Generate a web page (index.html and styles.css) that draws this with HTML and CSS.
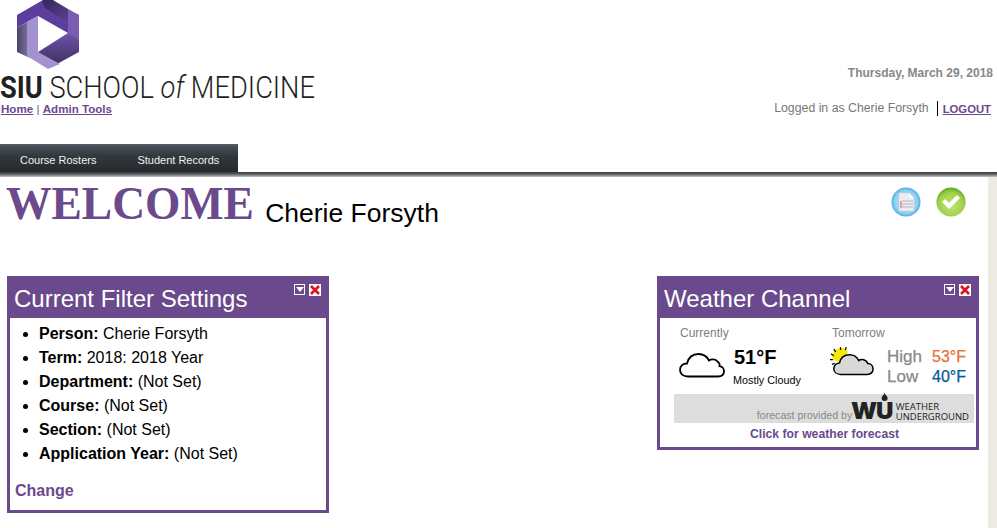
FILE: index.html
```html
<!DOCTYPE html>
<html lang="en">
<head>
	<meta charset="UTF-8">
	<title>SIU School of Medicine</title>
	<link rel="stylesheet" href="styles.css">
</head>
<body>
	<div class="top">
		<div class="brand">
			<svg class="hex" width="64" height="70" viewBox="16 0 64 70">
				<defs>
					<linearGradient id="g1" x1="0" y1="0" x2="1" y2="0"><stop offset="0" stop-color="#4a4468"/><stop offset="1" stop-color="#8479a8"/></linearGradient>
					<linearGradient id="g2" x1="0" y1="0" x2="1" y2="1"><stop offset="0" stop-color="#33235c"/><stop offset="1" stop-color="#5a4490"/></linearGradient>
					<linearGradient id="g3" x1="0" y1="0" x2="0" y2="1"><stop offset="0" stop-color="#6d54a6"/><stop offset="1" stop-color="#3c2f63"/></linearGradient>
				</defs>
				<polygon points="17,15 43,0 79,15 79,40 68,33 38,16 27,22 17,28" fill="#5c3f9c"/>
				<polygon points="42,1 48,-3 68,9 68,23 45,8" fill="url(#g2)"/>
				<polygon points="68,9 79,15 79,41 68,34" fill="#7a5db3"/>
				<polygon points="38,52 68,33 79,40 79,52 55,65" fill="url(#g3)"/>
				<polygon points="17,28 27,22 27,52 30,58 17,52" fill="url(#g1)"/>
				<polygon points="27,22 38,16 38,52 60,64 48,69 27,56" fill="#a392cf"/>
			</svg>
			<div class="wordmark"><b>SIU</b> SCHOOL <i>of</i> MEDICINE</div>
			<div class="crumbs"><a href="#">Home</a> | <a href="#">Admin Tools</a></div>
		</div>
		<div class="account">
			<div class="today">Thursday, March 29, 2018</div>
			<div class="login"><span class="who">Logged in as Cherie Forsyth</span><a href="#">LOGOUT</a></div>
		</div>
	</div>

	<ul class="tabs">
		<li>Course Rosters</li>
		<li>Student Records</li>
	</ul>
	<div class="rule"></div>

	<div class="main">
		<div class="content">
			<div class="welcome">
				<h1>WELCOME <span>Cherie Forsyth</span></h1>
				<div class="actions">
					<svg width="30" height="30" viewBox="0 0 30 30">
						<defs><radialGradient id="blue" cx=".5" cy=".5" r=".55"><stop offset="0" stop-color="#c4e8f8"/><stop offset=".72" stop-color="#8fd0f0"/><stop offset="1" stop-color="#2f9ade"/></radialGradient></defs>
						<circle cx="15" cy="15" r="14.5" fill="url(#blue)"/>
						<path d="M8 6h10l5 5v13H8z" fill="#ececf2" stroke="#c8c8d4" stroke-width=".5"/>
						<path d="M18 6v5h5z" fill="#fff"/>
						<path d="M10 14v7" stroke="#e2555b" stroke-width="1"/>
						<path d="M11 14h11M11 17h11M11 20h11" stroke="#b4b4bc" stroke-width="1"/>
					</svg>
					<svg width="30" height="30" viewBox="0 0 30 30">
						<defs><radialGradient id="green" cx=".5" cy=".6" r=".6"><stop offset="0" stop-color="#c4e27a"/><stop offset=".72" stop-color="#a0d046"/><stop offset="1" stop-color="#5aa628"/></radialGradient></defs>
						<circle cx="15" cy="15" r="14.5" fill="url(#green)"/>
						<path d="M6 15l3-3 4 4 8-8 3 3-11 11z" fill="#fff"/>
					</svg>
				</div>
			</div>

			<div class="panels">
				<div class="panel">
					<div class="panel-head">
						<h2>Current Filter Settings</h2>
						<div class="panel-btns"><span class="btn-drop"></span><span class="btn-close"><svg width="10" height="10" viewBox="0 0 10 10"><path d="M1 1l8 8M9 1l-8 8" stroke="#e0101c" stroke-width="2.6"/></svg></span></div>
					</div>
					<div class="panel-body">
						<ul class="filters">
							<li><b>Person:</b> Cherie Forsyth</li>
							<li><b>Term:</b> 2018: 2018 Year</li>
							<li><b>Department:</b> (Not Set)</li>
							<li><b>Course:</b> (Not Set)</li>
							<li><b>Section:</b> (Not Set)</li>
							<li><b>Application Year:</b> (Not Set)</li>
						</ul>
						<a class="change" href="#">Change</a>
					</div>
				</div>

				<div class="panel">
					<div class="panel-head">
						<h2>Weather Channel</h2>
						<div class="panel-btns"><span class="btn-drop"></span><span class="btn-close"><svg width="10" height="10" viewBox="0 0 10 10"><path d="M1 1l8 8M9 1l-8 8" stroke="#e0101c" stroke-width="2.6"/></svg></span></div>
					</div>
					<div class="weather">
						<div class="days">
							<div class="day day-now">
								<div class="day-name">Currently</div>
								<div class="day-row">
									<svg width="46" height="26" viewBox="0 0 46 26"><path d="M9 24.500C4 24.500 1 21.500 1 18C1 14 4 11.500 8 11.500C9.500 5.500 14 2 19.500 2C24.500 2 28 4.500 30 8.500C32 7 36 7 38 9C40 10.500 41 12.500 40.500 14C43.500 14.500 45 17 45 19C45 22.500 42.500 24.500 39 24.500Z" fill="#fff" stroke="#000" stroke-width="1.800"/></svg>
									<div class="now-text">
										<div class="temp">51°F</div>
										<div class="cond">Mostly Cloudy</div>
									</div>
								</div>
							</div>
							<div class="day">
								<div class="day-name">Tomorrow</div>
								<div class="day-row">
									<svg width="44" height="30" viewBox="0 0 46 31"><path d="M3 14A9 9 0 0 1 19 6L11 17z" fill="#f7e80c"/><path d="M11 1v3M4 3l2 3M1 8l3 2M0 14h3M2 19l3-1M17 1l-1 3" stroke="#000" stroke-width="1.300"/><path d="M11 29.500C7 29.500 4 27 4 23.500C4 20 7 17.500 10 17.500C11 12 15 9 20.500 9C25 9 28 11 30 15C33 13 38 14 39.500 18C43 18 45 21 45 24C45 27 42.500 29.500 39 29.500Z" fill="#d8d8d8" stroke="#000" stroke-width="1.600"/></svg>
									<div class="outlook">
										<div class="outlook-row"><span class="lbl">High</span><span class="hi">53°F</span></div>
										<div class="outlook-row"><span class="lbl">Low</span><span class="lo">40°F</span></div>
									</div>
								</div>
							</div>
						</div>
						<div class="wu">
							<span class="wu-by">forecast provided by</span>
							<span class="wu-mark">WU<svg class="drop" width="6" height="9" viewBox="0 0 6 9"><path d="M3 0C3 3 6 4 6 6A3 3 0 0 1 0 6C0 4 3 3 3 0Z" fill="#222"/></svg></span>
							<span class="wu-name">WEATHER<br>UNDERGROUND</span>
						</div>
						<a class="forecast" href="#">Click for weather forecast</a>
					</div>
				</div>
			</div>
		</div>
		<div class="strip"></div>
	</div>
</body>
</html>
```

FILE: styles.css
```css
* { padding: 0; margin: 0; box-sizing: border-box; }
html, body { height: 100%; overflow: hidden; }
body { display: flex; flex-direction: column; background: #fff; font-family: "Liberation Sans", Arial, sans-serif; font-size: 12px; color: #000; }
li { list-style: none; }
a { color: #6a4a8c; }

.top { height: 144px; display: flex; justify-content: space-between; }
.hex { display: block; margin-left: 16px; }
.wordmark { height: 31px; margin-top: 2px; font-family: Roboto, sans-serif; font-weight: 300; font-size: 31px; line-height: 31px; color: #231f20; white-space: nowrap; transform: scaleX(.88); transform-origin: left top; }
.wordmark b { font-weight: 700; }
.crumbs { margin-top: -1px; padding-left: 1px; font-size: 11.600px; line-height: 14px; color: #6a4a8c; }
.crumbs a { font-weight: bold; }
.account { padding: 66px 4px 0 0; color: #777; text-align: right; }
.today { font-weight: bold; line-height: 14px; color: #888; }
.login { display: flex; justify-content: flex-end; align-items: center; margin-top: 21px; height: 15px; padding-right: 2px; }
.who { padding-right: 8px; border-right: 1px solid #000; font-size: 12.300px; line-height: 15px; }
.login a { margin-left: 5px; font-size: 11.300px; font-weight: bold; }

.tabs { width: 238px; height: 28px; display: flex; padding: 4px 0 0 20px; gap: 41px; align-items: center; background: linear-gradient(#5d6470 0, #4a5058 2px, #33383e 12px, #25292d 100%); font-size: 11px; color: #f0f0f0; }
.rule { height: 5px; background: linear-gradient(#3c3f42 0, #55585c 40%, #c4c6c8 100%); }

.main { flex: 1; display: flex; min-height: 0; }
.content { flex: 1; padding: 0 9px 0 7px; }
.strip { width: 9px; background: #eeebe5; }

.welcome { height: 99px; display: flex; justify-content: space-between; padding-right: 13px; }
h1 { margin-left: -1px; font-family: "Liberation Serif", "Times New Roman", serif; font-size: 45.500px; font-weight: bold; line-height: 54px; color: #6a4a8c; }
h1 span { font-family: "Liberation Sans", Arial, sans-serif; font-size: 26.500px; font-weight: normal; vertical-align: -3px; color: #000; }
.actions { display: flex; gap: 15px; padding-top: 10px; }

.panels { display: flex; justify-content: space-between; align-items: flex-start; }
.panel { width: 322px; border: 3px solid #6a4a8c; background: #fff; }
.panel-head { height: 39px; display: flex; justify-content: space-between; background: #6a4a8c; padding: 5px 5px 0 5px; }
h2 { margin-left: -1px; font-size: 24px; font-weight: normal; line-height: 30px; color: #fff; }
.panel-btns { display: flex; gap: 4px; height: 13px; }
.btn-drop { width: 11px; height: 11px; border: 1px solid #fff; display: flex; justify-content: center; background: #6a4a8c; }
.btn-drop::after { content: ""; margin-top: 2px; border: 4px solid transparent; border-top: 5px solid #fff; border-bottom: 0; height: 0; }
.btn-close { width: 12px; height: 12px; background: #fff; display: flex; align-items: center; justify-content: center; }

.panel-body { height: 192px; padding-top: 4px; }
.filters { padding-left: 29px; }
.filters li { list-style: disc; font-size: 16px; line-height: 24px; }
.change { display: block; margin: 13px 0 0 5px; font-size: 16px; font-weight: bold; line-height: 24px; text-decoration: none; }

.weather { height: 129px; padding: 0 2px 0 13px; }
.days { display: flex; height: 76px; padding: 7px 0 0 7px; }
.day { display: flex; flex-direction: column; }
.day-now { width: 152px; }
.day-name { line-height: 16px; color: #808080; }
.day-row { display: flex; }
.day-row > svg { margin-top: 5px; margin-left: -2px; margin-right: 13px; }
.day-now .day-row svg { margin-top: 11px; margin-left: -1px; margin-right: 9px; }
.temp { font-size: 20px; font-weight: bold; line-height: 22px; margin-top: 5px; }
.cond { margin: 5px 0 0 -1px; font-size: 10.800px; line-height: 14px; white-space: nowrap; }
.outlook { margin-top: 6px; font-size: 17px; line-height: 20px; -webkit-text-stroke: .25px; }
.outlook-row { display: flex; width: 79px; justify-content: space-between; }
.lbl { color: #888; }
.hi { color: #e8703a; font-size: 16px; }
.lo { color: #005a9c; font-size: 16px; }

.wu { height: 29px; margin-left: 1px; display: flex; justify-content: flex-end; align-items: flex-end; background: #ddd; padding-right: 5px; }
.wu-by { font-size: 10.600px; line-height: 15px; color: #888; }
.wu-mark { position: relative; font-family: Inter, sans-serif; font-weight: 900; font-size: 23px; line-height: 23px; letter-spacing: -1px; color: #222; margin: 0 4px 0 0; transform: scaleX(1.05); }
.drop { position: absolute; right: 5px; top: -8px; }
.wu-name { font-family: "Open Sans", sans-serif; font-size: 9.500px; line-height: 10px; color: #222; padding-bottom: 1px; }
.forecast { display: block; text-align: center; font-size: 12.200px; font-weight: bold; line-height: 20px; padding-top: 1px; text-decoration: none; margin-left: 2px; }
```
